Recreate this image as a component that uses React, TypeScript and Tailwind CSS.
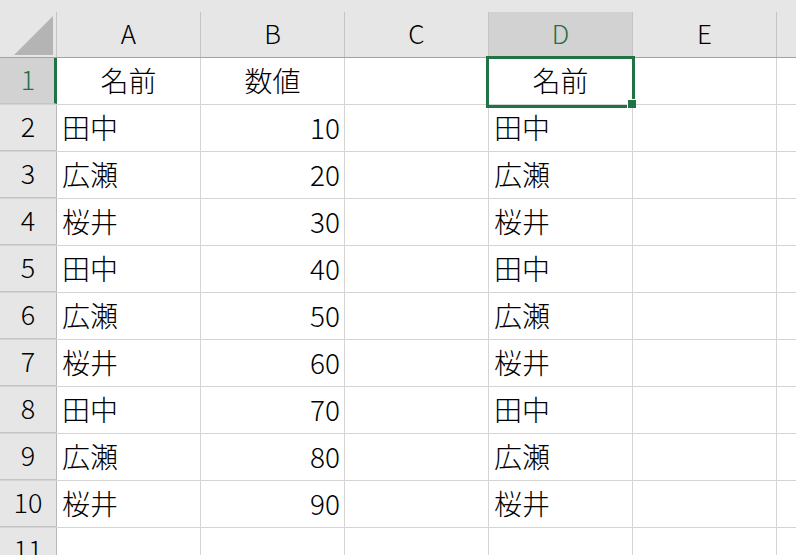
import React from "react";

const names = ["田中", "広瀬", "桜井", "田中", "広瀬", "桜井", "田中", "広瀬", "桜井"];
const cols = ["A", "B", "C", "D", "E", ""];

const cellBase = "w-[144px] shrink-0 h-full border-r border-[#d4d4d4] flex items-center pb-[3px]";

const App = () => {
  const rows = [
    { a: "名前", b: "数値", d: "名前", head: true },
    ...names.map((n, i) => ({ a: n, b: String((i + 1) * 10), d: n, head: false })),
    { a: "", b: "", d: "", head: false },
  ];

  return (
    <div
      className="relative w-[796px] h-[555px] overflow-hidden bg-white text-black font-light"
      style={{ fontFamily: '"Noto Sans CJK JP", "Noto Sans", sans-serif' }}
    >
      {/* column header */}
      <div className="flex items-end h-[58px] bg-[#e6e6e6] border-b border-[#a3a3a3]">
        <div className="w-[57px] shrink-0 h-[45px] border-r border-[#c4c4c4] relative">
          <svg className="absolute left-0 top-[-12px]" width="56" height="57" viewBox="0 0 56 57">
            <polygon points="14,55 53,16 53,55" fill="#b4b4b4" />
          </svg>
        </div>
        {cols.map((c, i) => (
          <div
            key={i}
            className={
              "w-[144px] shrink-0 h-[45px] border-r border-[#c4c4c4] flex items-center justify-center text-[26px] pb-[4px] " +
              (c === "D" ? "bg-[#d2d2d2] text-[#217346]" : "")
            }
          >
            {c}
          </div>
        ))}
      </div>

      {/* rows */}
      {rows.map((r, i) => (
        <div key={i} className="flex h-[47px] border-b border-[#d4d4d4]">
          <div
            className={
              "w-[57px] shrink-0 h-full flex items-center justify-center text-[27px] pb-[3px] border-b border-[#c4c4c4] -mb-px " +
              (i === 0
                ? "bg-[#d2d2d2] text-[#217346] border-r-[3px] border-r-[#217346] pl-[2px]"
                : "bg-[#e6e6e6] border-r border-r-[#b8b8b8]")
            }
          >
            {i + 1}
          </div>
          <div className={cellBase + " text-[28px] " + (r.head ? "justify-center" : "pl-[5px]")}>{r.a}</div>
          <div className={cellBase + " text-[28px] " + (r.head ? "justify-center" : "justify-end pr-[4px]")}>
            {r.b}
          </div>
          <div className={cellBase}></div>
          <div className={cellBase + " text-[28px] " + (r.head ? "justify-center" : "pl-[5px]")}>{r.d}</div>
          <div className={cellBase}></div>
          <div className={cellBase}></div>
        </div>
      ))}

      {/* selection box on D1 */}
      <div className="absolute left-[486px] top-[56px] w-[149px] h-[52px] border-[3px] border-[#217346] pointer-events-none" />
      <div className="absolute left-[627px] top-[99px] w-[9px] h-[9px] bg-[#217346] border-l border-t border-white" />
    </div>
  );
};

export default App;
